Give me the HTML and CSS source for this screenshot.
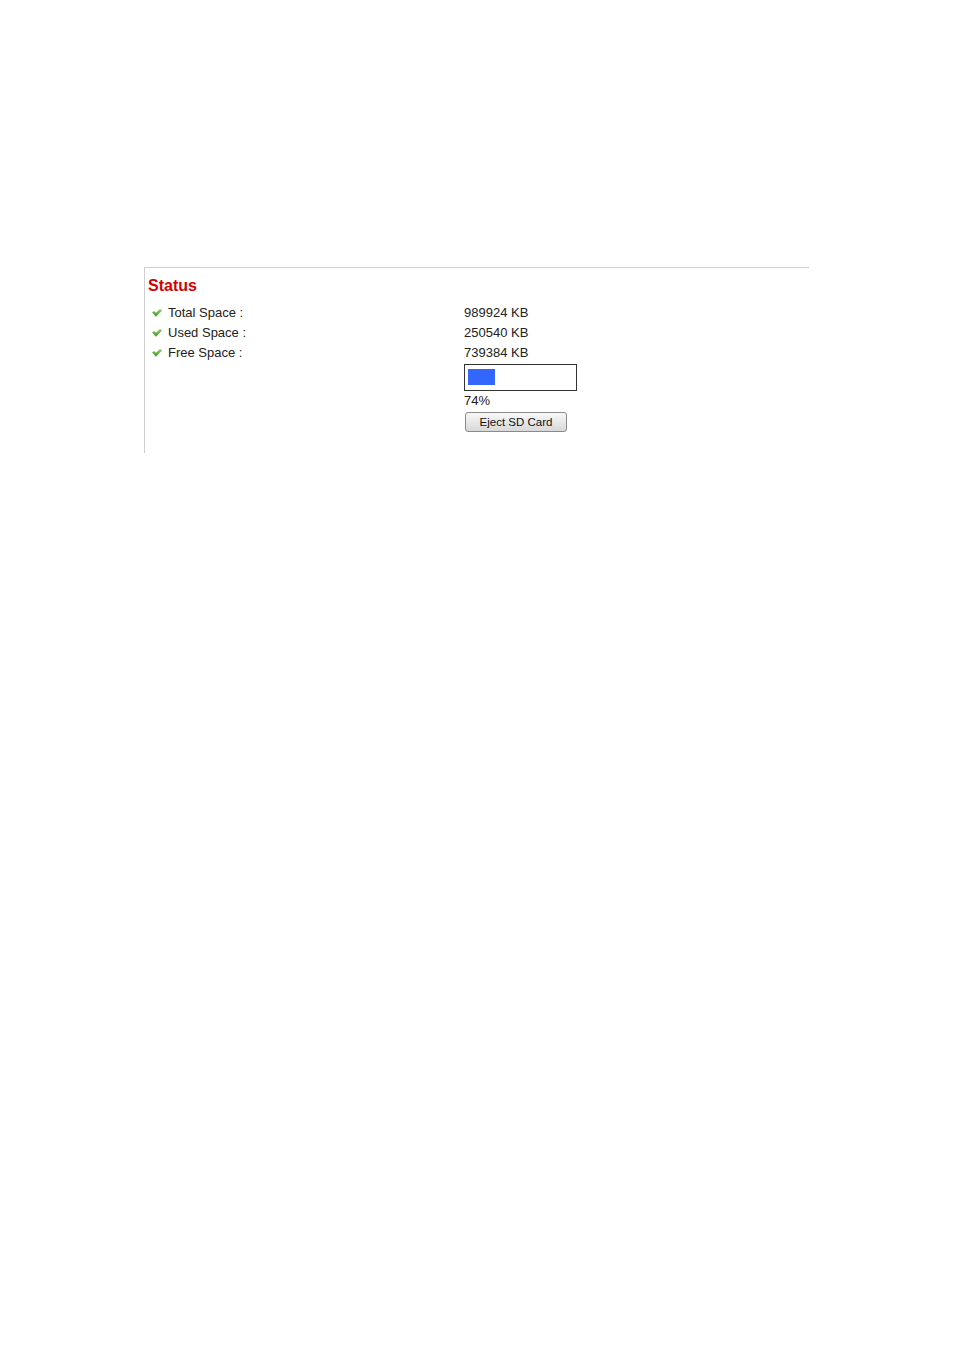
FILE: index.html
```html
<!DOCTYPE html>
<html>
<head>
<meta charset="utf-8">
<link rel="stylesheet" href="styles.css">
</head>
<body>
<svg class="defs" width="0" height="0"><defs><linearGradient id="g" x1="0" y1="0" x2="0" y2="1"><stop offset="0" stop-color="#8fd16a"/><stop offset="1" stop-color="#3f9424"/></linearGradient></defs></svg>
<div class="panel">
  <div class="title">Status</div>
  <div class="grid">
    <div class="label"><svg class="chk" viewBox="0 0 10 8" width="10" height="8"><path d="M0 3.4 L2 2 L3.9 3.8 L8 0 L10 1.4 L3.9 7.8 Z" fill="url(#g)"/></svg>Total Space :</div>
    <div class="val">989924 KB</div>
    <div class="label"><svg class="chk" viewBox="0 0 10 8" width="10" height="8"><path d="M0 3.4 L2 2 L3.9 3.8 L8 0 L10 1.4 L3.9 7.8 Z" fill="url(#g)"/></svg>Used Space :</div>
    <div class="val">250540 KB</div>
    <div class="label"><svg class="chk" viewBox="0 0 10 8" width="10" height="8"><path d="M0 3.4 L2 2 L3.9 3.8 L8 0 L10 1.4 L3.9 7.8 Z" fill="url(#g)"/></svg>Free Space :</div>
    <div class="val">739384 KB</div>
    <div class="label"></div>
    <div class="val">
      <div class="bar"><div class="fill"></div></div>
      <div class="pct">74%</div>
      <button class="btn">Eject SD Card</button>
    </div>
  </div>
</div>
</body>
</html>
```
FILE: styles.css
```css
html, body { margin: 0; padding: 0; background: #fff; }
body { font-family: "Liberation Sans", Arial, sans-serif; color: #222; }
.defs { position: absolute; }
.panel {
  margin: 267px 0 0 144px;
  width: 665px;
  height: 186px;
  border-top: 1px solid #cfcfcf;
  border-left: 1px solid #cfcfcf;
  box-sizing: border-box;
}
.title {
  color: #d40000;
  font-weight: bold;
  font-size: 16px;
  line-height: 20px;
  padding: 8px 0 0 3px;
}
.grid {
  display: grid;
  grid-template-columns: 319px 1fr;
  margin-top: 7px;
  font-size: 13px;
}
.label, .val { line-height: 20px; height: 20px; }
.label { padding-left: 7px; display: flex; align-items: center; }
.chk { margin-right: 6px; }
.val { color: #222; }
.grid .val:last-child { height: auto; }
.bar {
  margin-top: 1px;
  width: 113px;
  height: 27px;
  border: 1px solid #333;
  box-sizing: border-box;
  padding: 4px 3px;
}
.fill { width: 27px; height: 16px; background: #3366ff; }
.pct { line-height: 17px; height: 17px; padding-top: 1px; }
.btn {
  margin: 3px 0 0 1px;
  width: 102px;
  height: 20px;
  font-family: "Liberation Sans", Arial, sans-serif;
  font-size: 11.5px;
  color: #111;
  padding: 0;
  border: 1px solid #8a8a8a;
  border-radius: 3px;
  background: linear-gradient(#f8f8f8, #d8d8d8);
}
```
